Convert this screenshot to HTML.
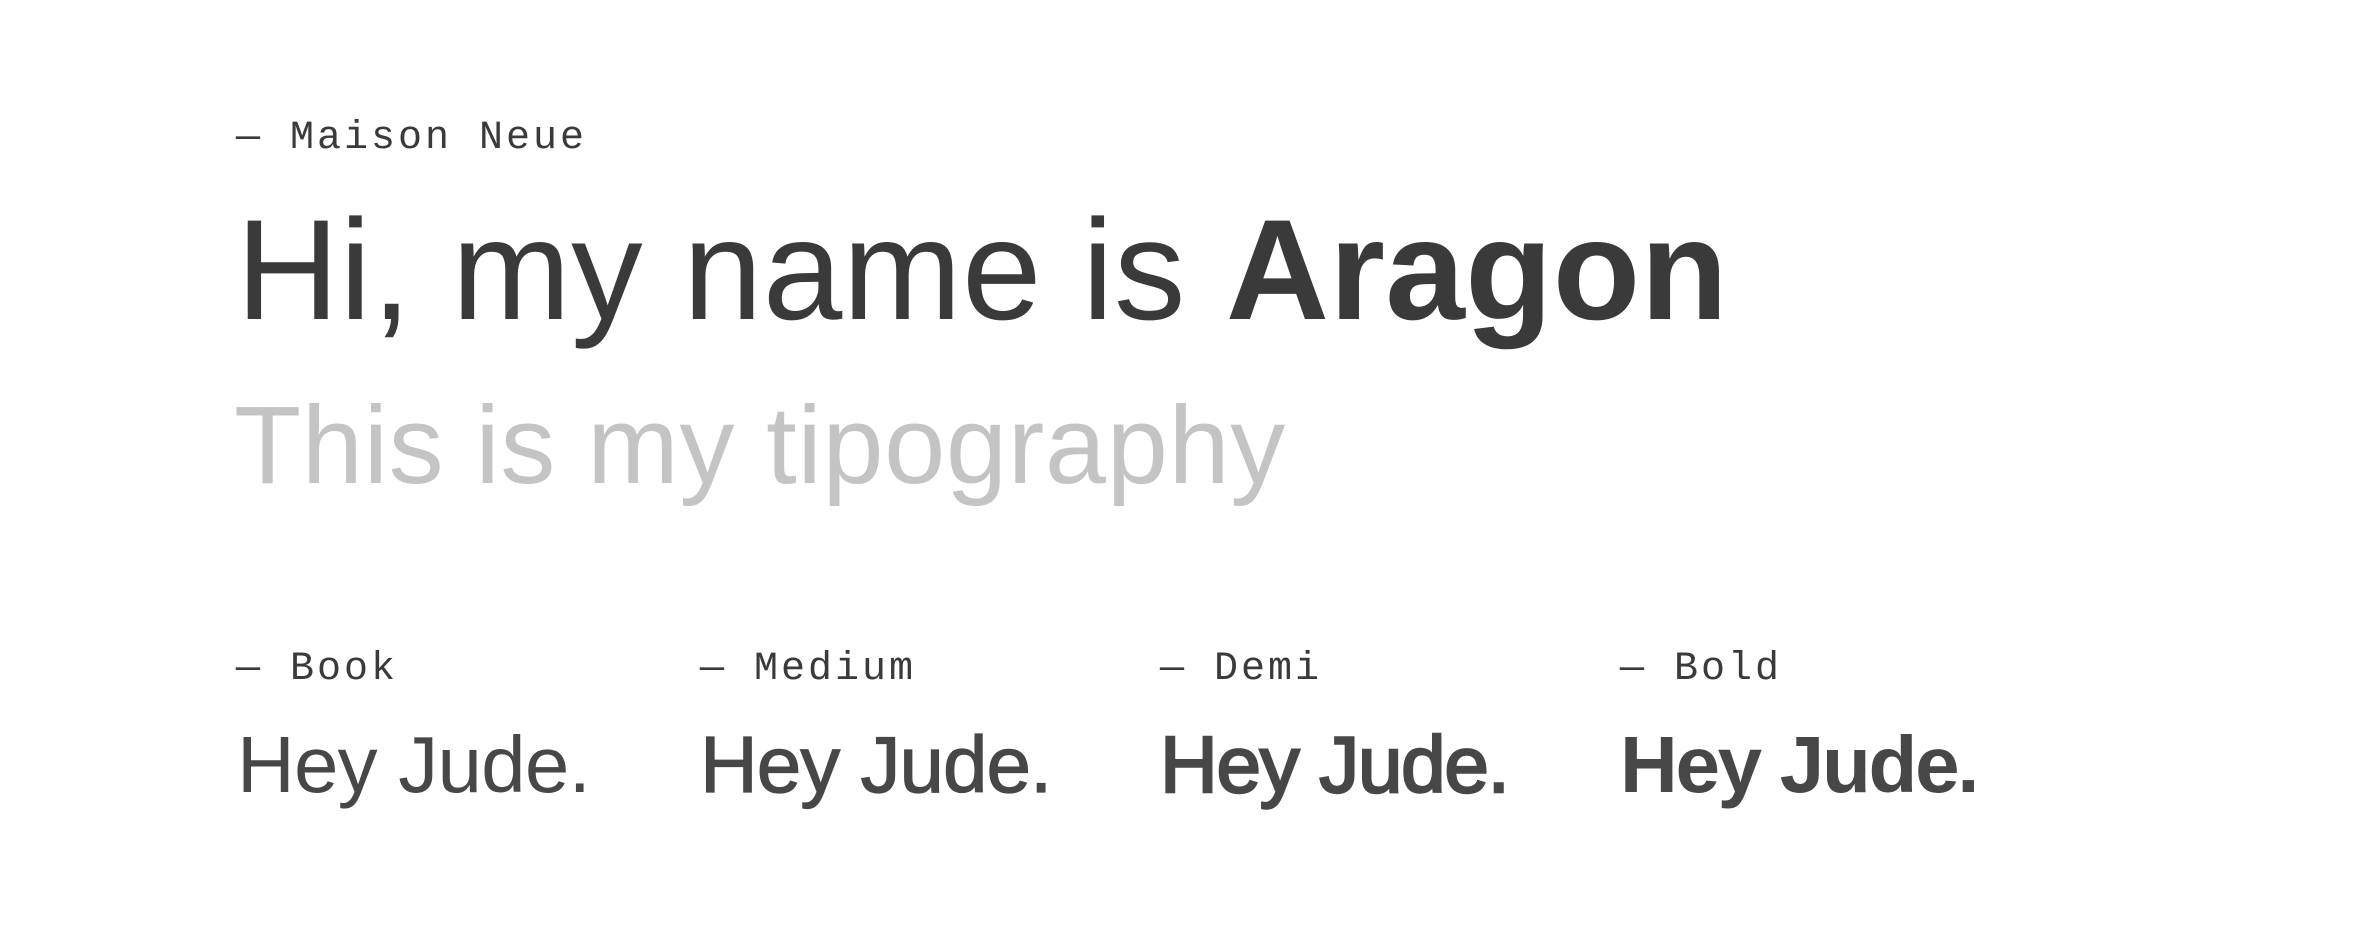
<!DOCTYPE html>
<html><head><meta charset="utf-8"><style>
html,body{margin:0;padding:0;background:#fff;width:2373px;height:925px;overflow:hidden;position:relative}
div{position:absolute;white-space:nowrap;line-height:1}
.lab{font-family:"Liberation Mono",monospace;font-size:40px;letter-spacing:3px;color:#3a3a3a}
.hd{font-family:"Liberation Sans",sans-serif;font-size:143px;color:#3a3a3a;letter-spacing:0.3px}
.sub{font-family:"Liberation Sans",sans-serif;font-size:110px;color:#c4c4c4;letter-spacing:0.6px}
.hj{font-family:"Liberation Sans",sans-serif;font-size:80px;color:#474747}
</style></head><body>
<div class="lab" style="left:236px;top:119px">— Maison Neue</div>
<div class="hd" style="left:236px;top:199px">Hi, my name is <b>Aragon</b></div>
<div class="sub" style="left:234px;top:391px">This is my tipography</div>
<div class="lab" style="left:236px;top:650px">— Book</div>
<div class="lab" style="left:700px;top:650px">— Medium</div>
<div class="lab" style="left:1160px;top:650px">— Demi</div>
<div class="lab" style="left:1620px;top:650px">— Bold</div>
<div class="hj" style="left:237px;top:725px;letter-spacing:-0.8px">Hey Jude.</div>
<div class="hj" style="left:700px;top:725px;letter-spacing:-1px;-webkit-text-stroke:1.2px #474747">Hey Jude.</div>
<div class="hj" style="left:1160px;top:725px;letter-spacing:-1.3px;-webkit-text-stroke:2.4px #474747">Hey Jude.</div>
<div class="hj" style="left:1620px;top:725px;font-weight:bold;letter-spacing:-2.3px">Hey Jude.</div>
</body></html>
